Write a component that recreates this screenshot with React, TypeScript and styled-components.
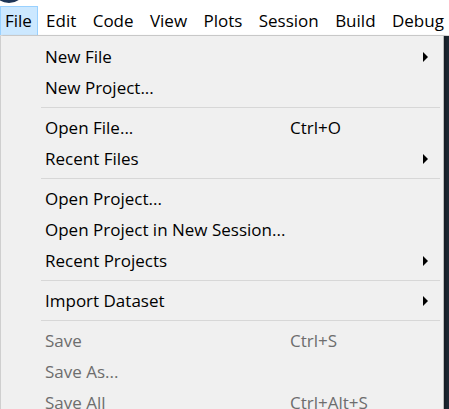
import React from "react";
import styled, { createGlobalStyle } from "styled-components";

const GlobalStyle = createGlobalStyle`
  html, body {
    margin: 0;
    padding: 0;
    background: #1c2631;
    overflow: hidden;
  }
  body {
    font-family: "Segoe UI", "Open Sans", "Noto Sans", sans-serif;
  }
`;

const Page = styled.div`
  width: 449px;
  height: 409px;
  display: flex;
  flex-direction: column;
  position: relative;
`;

const Arc = styled.div`
  position: absolute;
  left: -6px;
  top: -22px;
  width: 30px;
  height: 25px;
  border-radius: 50%;
  background: #1d3557;
`;

const MenuBar = styled.div`
  height: 35px;
  background: #ffffff;
  border-bottom: 1px solid #d9d9d9;
  display: flex;
  align-items: flex-end;
  flex-shrink: 0;
  white-space: nowrap;
`;

const BarItem = styled.div<{ $active?: boolean }>`
  height: 29px;
  box-sizing: border-box;
  padding: 0 ${(p) => (p.$active ? "5px" : "7.2px")} 1px ${(p) => (p.$active ? "4px" : "7.2px")};
  display: flex;
  align-items: center;
  font-size: 17px;
  color: #000;
  background: ${(p) => (p.$active ? "#cce8ff" : "transparent")};
  border: 1px solid ${(p) => (p.$active ? "#99d1ff" : "transparent")};
  border-bottom: none;
`;

const Dropdown = styled.div`
  width: 444px;
  flex: 1;
  background: #f0f0f0;
  border-left: 1px solid #cfcfcf;
  border-right: 1px solid #b9b9b9;
  box-sizing: border-box;
  padding-top: 5px;
  box-shadow: 2px 0 2px rgba(0, 0, 0, 0.25);
`;

const Item = styled.div<{ $disabled?: boolean }>`
  height: 31px;
  display: grid;
  grid-template-columns: 245px 1fr 20px;
  align-items: center;
  padding-left: 44px;
  font-size: 17px;
  color: ${(p) => (p.$disabled ? "#6d6d6d" : "#000")};
  white-space: nowrap;
`;

const Shortcut = styled.span``;

const Arrow = styled.span`
  width: 0;
  height: 0;
  border-top: 5px solid transparent;
  border-bottom: 5px solid transparent;
  border-left: 5px solid #000;
`;

const Separator = styled.div`
  height: 1px;
  background: #d7d7d7;
  margin: 4px 3px 4px 40px;
`;

type Entry =
  | { label: string; shortcut?: string; sub?: boolean; disabled?: boolean }
  | "sep";

const entries: Entry[] = [
  { label: "New File", sub: true },
  { label: "New Project..." },
  "sep",
  { label: "Open File...", shortcut: "Ctrl+O" },
  { label: "Recent Files", sub: true },
  "sep",
  { label: "Open Project..." },
  { label: "Open Project in New Session..." },
  { label: "Recent Projects", sub: true },
  "sep",
  { label: "Import Dataset", sub: true },
  "sep",
  { label: "Save", shortcut: "Ctrl+S", disabled: true },
  { label: "Save As...", disabled: true },
  { label: "Save All", shortcut: "Ctrl+Alt+S", disabled: true },
];

const menus = ["File", "Edit", "Code", "View", "Plots", "Session", "Build", "Debug"];

export default function App() {
  return (
    <Page>
      <GlobalStyle />
      <MenuBar>
        {menus.map((m, i) => (
          <BarItem key={m} $active={i === 0}>
            {m}
          </BarItem>
        ))}
      </MenuBar>
      <Arc />
      <Dropdown>
        {entries.map((e, i) =>
          e === "sep" ? (
            <Separator key={i} />
          ) : (
            <Item key={i} $disabled={e.disabled}>
              <span>{e.label}</span>
              <Shortcut>{e.shortcut}</Shortcut>
              {e.sub ? <Arrow /> : <span />}
            </Item>
          )
        )}
      </Dropdown>
    </Page>
  );
}
